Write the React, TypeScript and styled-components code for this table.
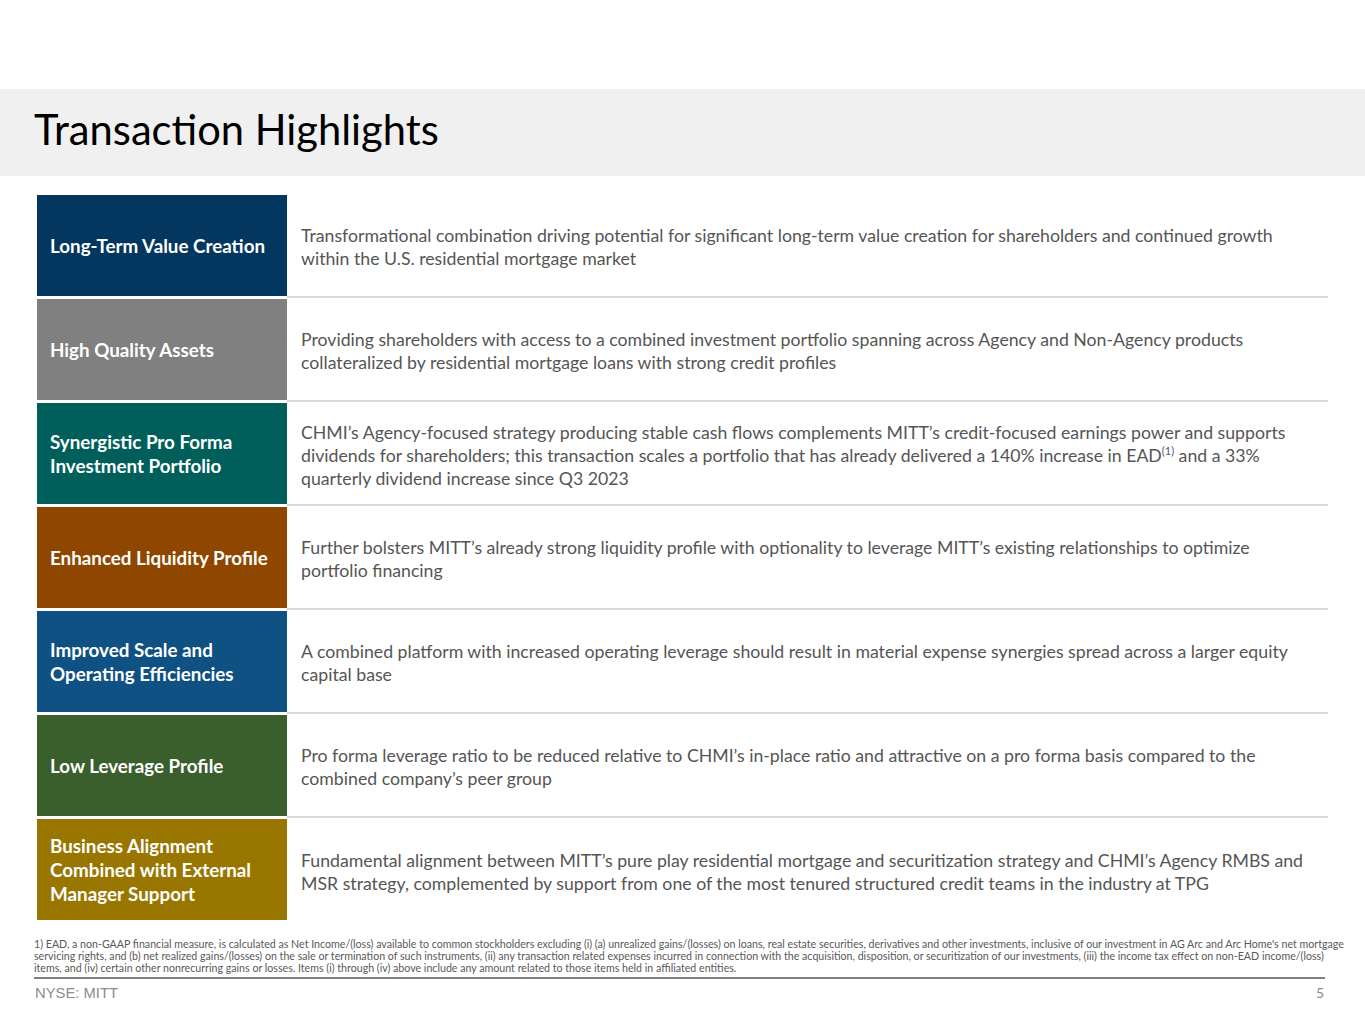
import React from "react";
import styled, { createGlobalStyle } from "styled-components";

type Highlight = {
  label: React.ReactNode;
  color: string;
  text: React.ReactNode;
};

const GlobalStyle = createGlobalStyle`
  html, body {
    margin: 0;
    padding: 0;
    background: #ffffff;
  }
  body {
    font-family: Lato, "Open Sans", sans-serif;
  }
`;

const Page = styled.div`
  width: 1365px;
  height: 1024px;
  background: #ffffff;
  overflow: hidden;
  display: flex;
  flex-direction: column;
`;

const TitleBand = styled.header`
  margin-top: 89px;
  height: 87px;
  box-sizing: border-box;
  background: #f0f0f0;
  display: flex;
  align-items: center;
  padding: 0 0 7px 34px;
`;

const Title = styled.h1`
  margin: 0;
  font-family: Lato, sans-serif;
  font-weight: 400;
  font-size: 41.7px;
  color: #000000;
`;

const Table = styled.section`
  margin: 19px 0 0 37px;
  width: 1291px;
  display: flex;
  flex-direction: column;
`;

const Row = styled.div`
  display: grid;
  grid-template-columns: 250px 1fr;
  height: 104px;
`;

const Label = styled.div<{ $bg: string }>`
  background: ${(p) => p.$bg};
  height: 101px;
  box-sizing: border-box;
  padding: 0 8px 0 13px;
  display: flex;
  align-items: center;
  color: #ffffff;
  font-weight: 700;
  font-size: 18.8px;
  line-height: 24px;
`;

const Body = styled.div<{ $last?: boolean }>`
  box-sizing: border-box;
  height: 103px;
  padding: 3px 0 0 14px;
  border-bottom: ${(p) => (p.$last ? "none" : "2px solid #dadada")};
  display: flex;
  align-items: center;
  color: #555555;
  font-size: 17.7px;
  line-height: 23px;
  white-space: nowrap;
`;

const Sup = styled.sup`
  font-size: 11px;
  line-height: 0;
`;

const Footnote = styled.p`
  margin: 15px 0 0 34px;
  width: 1320px;
  color: #595959;
  font-size: 10.65px;
  line-height: 12px;
  white-space: nowrap;
`;

const Footer = styled.footer`
  margin: 3px 0 0 34px;
  width: 1291px;
  border-top: 2px solid #808080;
  display: flex;
  justify-content: space-between;
  align-items: center;
  padding-top: 5px;
`;

const Ticker = styled.span`
  font-family: "Liberation Sans", Arial, sans-serif;
  font-size: 14.8px;
  color: #8c8c8c;
  padding-left: 1px;
`;

const PageNum = styled.span`
  font-size: 14px;
  color: #8c8c8c;
  padding-right: 1px;
`;

const highlights: Highlight[] = [
  {
    label: "Long-Term Value Creation",
    color: "#03375f",
    text: (
      <>
        Transformational combination driving potential for significant long-term value creation for shareholders and continued growth
        <br />
        within the U.S. residential mortgage market
      </>
    ),
  },
  {
    label: "High Quality Assets",
    color: "#808080",
    text: (
      <>
        Providing shareholders with access to a combined investment portfolio spanning across Agency and Non-Agency products
        <br />
        collateralized by residential mortgage loans with strong credit profiles
      </>
    ),
  },
  {
    label: (
      <>
        Synergistic Pro Forma
        <br />
        Investment Portfolio
      </>
    ),
    color: "#005f5a",
    text: (
      <>
        CHMI’s Agency-focused strategy producing stable cash flows complements MITT’s credit-focused earnings power and supports
        <br />
        dividends for shareholders; this transaction scales a portfolio that has already delivered a 140% increase in EAD<Sup>(1)</Sup> and a 33%
        <br />
        quarterly dividend increase since Q3 2023
      </>
    ),
  },
  {
    label: "Enhanced Liquidity Profile",
    color: "#8f4700",
    text: (
      <>
        Further bolsters MITT’s already strong liquidity profile with optionality to leverage MITT’s existing relationships to optimize
        <br />
        portfolio financing
      </>
    ),
  },
  {
    label: (
      <>
        Improved Scale and
        <br />
        Operating Efficiencies
      </>
    ),
    color: "#0f5182",
    text: (
      <>
        A combined platform with increased operating leverage should result in material expense synergies spread across a larger equity
        <br />
        capital base
      </>
    ),
  },
  {
    label: "Low Leverage Profile",
    color: "#3a5e2c",
    text: (
      <>
        Pro forma leverage ratio to be reduced relative to CHMI’s in-place ratio and attractive on a pro forma basis compared to the
        <br />
        combined company’s peer group
      </>
    ),
  },
  {
    label: (
      <>
        Business Alignment
        <br />
        Combined with External
        <br />
        Manager Support
      </>
    ),
    color: "#997600",
    text: (
      <>
        Fundamental alignment between MITT’s pure play residential mortgage and securitization strategy and CHMI’s Agency RMBS and
        <br />
        MSR strategy, complemented by support from one of the most tenured structured credit teams in the industry at TPG
      </>
    ),
  },
];

export default function App() {
  return (
    <Page>
      <GlobalStyle />
      <TitleBand>
        <Title>Transaction Highlights</Title>
      </TitleBand>
      <Table>
        {highlights.map((h, i) => (
          <Row key={i}>
            <Label $bg={h.color}>
              <span>{h.label}</span>
            </Label>
            <Body $last={i === highlights.length - 1}>
              <span>{h.text}</span>
            </Body>
          </Row>
        ))}
      </Table>
      <Footnote>
        1) EAD, a non-GAAP financial measure, is calculated as Net Income/(loss) available to common stockholders excluding (i) (a) unrealized gains/(losses) on loans, real estate securities, derivatives and other investments, inclusive of our investment in AG Arc and Arc Home's net mortgage
        <br />
        servicing rights, and (b) net realized gains/(losses) on the sale or termination of such instruments, (ii) any transaction related expenses incurred in connection with the acquisition, disposition, or securitization of our investments, (iii) the income tax effect on non-EAD income/(loss)
        <br />
        items, and (iv) certain other nonrecurring gains or losses. Items (i) through (iv) above include any amount related to those items held in affiliated entities.
      </Footnote>
      <Footer>
        <Ticker>NYSE: MITT</Ticker>
        <PageNum>5</PageNum>
      </Footer>
    </Page>
  );
}
